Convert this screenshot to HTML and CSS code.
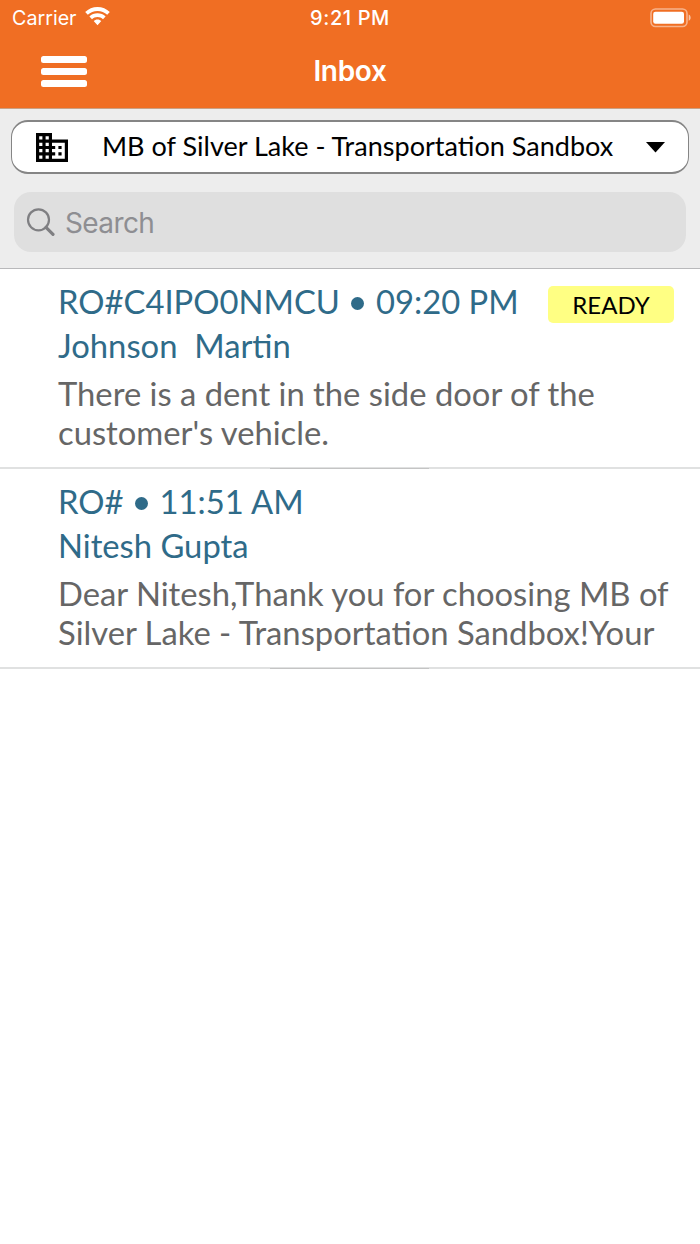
FILE: index.html
```html
<!DOCTYPE html>
<html lang="en">
<head>
<meta charset="utf-8">
<title>Inbox</title>
<link rel="stylesheet" href="styles.css">
</head>
<body>
<header class="top">
  <div class="status">
    <div class="carrier"><span>Carrier</span>
      <svg class="wifi" width="25" height="19" viewBox="0 0 25 19"><path d="M12.500 0C7.800 0 3.400 1.900 0.200 5L2.800 7.800C5.400 5.300 8.800 4 12.500 4S19.600 5.300 22.200 7.800L24.800 5C21.600 1.900 17.200 0 12.500 0ZM12.500 6.300C9.400 6.300 6.500 7.500 4.400 9.500L7 12.200C8.500 10.900 10.400 10.100 12.500 10.100S16.500 10.900 18 12.200L20.600 9.500C18.500 7.500 15.600 6.300 12.500 6.300ZM12.500 12.500C11 12.500 9.700 13.100 8.700 14L12.500 18.300L16.300 14C15.300 13.100 14 12.500 12.500 12.500Z" fill="#fff"/></svg>
    </div>
    <div class="clock">9:21 PM</div>
    <svg class="battery" width="42" height="20" viewBox="0 0 42 20"><rect x="1" y="1" width="36" height="17.500" rx="4.500" fill="none" stroke="#fff" stroke-opacity=".48" stroke-width="1.600"/><rect x="3.200" y="3.800" width="30.800" height="12" rx="2.300" fill="#fff"/><path d="M38.700 6.500C41.300 7.300 41.300 12 38.700 12.800Z" fill="#fff" fill-opacity=".6"/></svg>
  </div>
  <div class="nav">
    <div class="menu"><i></i><i></i><i></i></div>
    <h1 class="title">Inbox</h1>
    <span></span>
  </div>
</header>
<section class="filters">
  <div class="picker">
    <svg class="building" width="32" height="29" viewBox="2 3 20 18" preserveAspectRatio="none"><path d="M12 7V3H2v18h20V7H12zM6 19H4v-2h2v2zm0-4H4v-2h2v2zm0-4H4V9h2v2zm0-4H4V5h2v2zm4 12H8v-2h2v2zm0-4H8v-2h2v2zm0-4H8V9h2v2zm0-4H8V5h2v2zm10 12h-8v-2h2v-2h-2v-2h2v-2h-2V9h8v10zm-2-8h-2v2h2v-2zm0 4h-2v2h2v-2z"/></svg>
    <span class="place">MB of Silver Lake - Transportation Sandbox</span>
    <svg class="caret" width="19" height="11" viewBox="0 0 19 11"><path d="M0 0H19L9.500 10.500Z"/></svg>
  </div>
  <div class="search">
    <svg width="29" height="29" viewBox="0 0 29 29" fill="none" stroke="#7f7f82"><circle cx="12.500" cy="11.800" r="10.500" stroke-width="2.200"/><path d="M20 19.300L27 26.300" stroke-width="3.200" stroke-linecap="round"/></svg>
    <span class="hint">Search</span>
  </div>
</section>
<main>
  <article class="item">
    <div class="row"><h2 class="ref"><span>RO#C4IPO0NMCU</span><b class="dot"></b><span>09:20 PM</span></h2><span class="badge">READY</span></div>
    <div class="name">Johnson&nbsp; Martin</div>
    <p class="message">There is a dent in the side door of the<br>customer's vehicle.</p>
  </article>
  <article class="item">
    <div class="row"><h2 class="ref"><span>RO#</span><b class="dot"></b><span>11:51 AM</span></h2></div>
    <div class="name">Nitesh Gupta</div>
    <p class="message">Dear Nitesh,Thank you for choosing MB of<br>Silver Lake - Transportation Sandbox!Your</p>
  </article>
</main>
</body>
</html>
```
FILE: styles.css
```css
* { box-sizing: border-box; }
body { margin: 0; background: #fff; font-family: Lato, sans-serif; }
svg { display: block; flex: none; }
.top { height: 109px; background: #f06e23; border-bottom: 1px solid #c9a084; color: #fff; font-family: Inter, sans-serif; }
.status { height: 35px; display: grid; grid-template-columns: 1fr auto 1fr; align-items: center; padding: 0 9px 0 12px; }
.carrier { display: flex; align-items: center; gap: 8px; font-size: 19.700px; }
.wifi { margin-top: -2px; }
.clock { margin-right: 3px; font-size: 20px; font-weight: 500; letter-spacing: .6px; }
.battery { justify-self: end; margin-right: -1px; }
.nav { height: 73px; display: grid; grid-template-columns: 1fr auto 1fr; align-items: center; padding: 0 40px; }
.menu { width: 46px; margin-left: 1px; display: flex; flex-direction: column; gap: 5px; }
.menu i { height: 7px; border-radius: 2.500px; background: #fff; }
.title { margin: -1px 0 0; font-size: 28px; font-weight: 600; letter-spacing: -.3px; }
.filters { height: 160px; background: #ededed; border-bottom: 1px solid #b9b9bb; padding: 11px 11px 0; }
.picker { height: 54px; background: #fff; border: 2px solid #858585; border-width: 2px 1.500px; border-radius: 17px; display: flex; align-items: center; padding: 0 23px 0 24px; }
.place { margin: -4px 0 0 34px; flex: 1; font-size: 27.060px; white-space: nowrap; }
.search { height: 60px; margin: 18px 3px 0; border-radius: 17px; background: #dfdfdf; display: flex; align-items: center; padding-left: 12px; gap: 10px; }
.hint { margin-top: 2px; font-family: Inter, sans-serif; font-size: 28px; letter-spacing: -.6px; color: #8e8e92; }
.item { position: relative; height: 200px; padding: 11px 26px 0 58px; border-bottom: 2px solid #e0e1e1; }
.item::after { content: ""; position: absolute; left: 270px; bottom: -2px; width: 159px; height: 1px; background: #c4c4c4; }
.row { height: 43px; display: flex; justify-content: space-between; align-items: center; }
.ref { margin: 0; display: flex; align-items: center; color: #2f6b89; font-size: 32.780px; font-weight: 400; white-space: nowrap; }
.dot { width: 13px; height: 13px; margin: 3px 12px 0 11px; border-radius: 50%; background: #2f6b89; }
.badge { width: 126px; height: 37px; margin-top: 5px; border-radius: 5px; background: #ffff83; color: #000; font-size: 24px; line-height: 37px; text-align: center; }
.name { height: 46px; color: #2f6b89; font-size: 32.780px; line-height: 46px; white-space: pre; }
.message { margin: 5px 0 0; color: #666; font-size: 32.780px; line-height: 39px; white-space: nowrap; }
```
